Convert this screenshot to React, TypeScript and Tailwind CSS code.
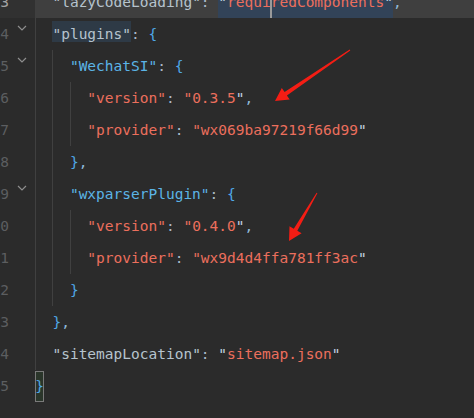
import type { ReactNode } from "react";

const K1 = "text-[#b6c3cd]";
const K2 = "text-[#5bb4e6]";
const K3 = "text-[#ec6f5d]";
const STR = "text-[#ec6f5d]";
const LQ = "text-[#c3d3e2]";
const BR = "text-[#4fa7e6]";
const PUN = "text-[#a9b7c6]";
const COMMA = "text-[#8fb9da]";

function Chevron() {
  return (
    <svg width="10" height="6" viewBox="0 0 10 6" className="block">
      <path d="M1 1 L5 5 L9 1" fill="none" stroke="#8e8e8e" strokeWidth="1.2" />
    </svg>
  );
}

function Row({
  n,
  indent,
  guides,
  current,
  fold,
  children,
}: {
  n: number;
  indent: number;
  guides: number;
  current?: boolean;
  fold?: boolean;
  children: ReactNode;
}) {
  return (
    <div className="flex h-[32px] shrink-0">
      <div className={`flex w-[35px] shrink-0 ${current ? "bg-[#313131]" : ""}`}>
        <div
          className={`flex w-[9px] justify-end overflow-hidden leading-[32px] ${
            current ? "text-[#a4a3a3]" : "text-[#5c5e60]"
          }`}
        >
          {n}
        </div>
        {fold && (
          <div className="ml-[8px] mt-[7px]">
            <Chevron />
          </div>
        )}
      </div>
      <div className={`flex flex-1 ${current ? "bg-[#3f3f3f]" : ""}`}>
        {Array.from({ length: indent }).map((_, i) => (
          <span
            key={i}
            className={`h-full w-[2ch] shrink-0 ${i < guides ? "border-l border-[#404040]" : ""}`}
          />
        ))}
        <div className="whitespace-pre leading-[32px]">{children}</div>
      </div>
    </div>
  );
}

export default function App() {
  return (
    <div className="relative h-[418px] w-[474px] overflow-hidden bg-[#2b2b2b] font-['DejaVu_Sans_Mono',monospace] text-[14.5px]">
      <div className="-mt-[14px] flex flex-col">
        <Row n={3} indent={1} guides={0} current>
          <span className={K1}>"lazyCodeLoading"</span>
          <span className={PUN}>: </span>
          <span className="inline-block h-[32px] bg-[#324358] align-top">
            <span className={LQ}>"</span>
            <span className={STR}>requi</span>
            <span className="relative -mx-[1px] inline-block h-[32px] w-[2px] bg-[#9a9a9a] align-top" />
            <span className={STR}>redComponents</span>
            <span className={LQ}>"</span>
          </span>
          <span className={COMMA}>,</span>
        </Row>
        <Row n={4} indent={1} guides={1} fold>
          <span className={`bg-[#2e3a46] pt-[5px] ${K1}`}>"plugins"</span>
          <span className={PUN}>: </span>
          <span className={BR}>{"{"}</span>
        </Row>
        <Row n={5} indent={2} guides={2} fold>
          <span className={K2}>"WechatSI"</span>
          <span className={PUN}>: </span>
          <span className={BR}>{"{"}</span>
        </Row>
        <Row n={6} indent={3} guides={3}>
          <span className={K3}>"version"</span>
          <span className={PUN}>: </span>
          <span className={STR}>"0.3.5</span>
          <span className={LQ}>"</span>
          <span className={COMMA}>,</span>
        </Row>
        <Row n={7} indent={3} guides={3}>
          <span className={K3}>"provider"</span>
          <span className={PUN}>: </span>
          <span className={STR}>"wx069ba97219f66d99</span>
          <span className={LQ}>"</span>
        </Row>
        <Row n={8} indent={2} guides={2}>
          <span className={BR}>{"}"}</span>
          <span className={COMMA}>,</span>
        </Row>
        <Row n={9} indent={2} guides={2} fold>
          <span className={K2}>"wxparserPlugin"</span>
          <span className={PUN}>: </span>
          <span className={BR}>{"{"}</span>
        </Row>
        <Row n={10} indent={3} guides={3}>
          <span className={K3}>"version"</span>
          <span className={PUN}>: </span>
          <span className={STR}>"0.4.0</span>
          <span className={LQ}>"</span>
          <span className={COMMA}>,</span>
        </Row>
        <Row n={11} indent={3} guides={3}>
          <span className={K3}>"provider"</span>
          <span className={PUN}>: </span>
          <span className={STR}>"wx9d4d4ffa781ff3ac</span>
          <span className={LQ}>"</span>
        </Row>
        <Row n={12} indent={2} guides={2}>
          <span className={BR}>{"}"}</span>
        </Row>
        <Row n={13} indent={1} guides={1}>
          <span className={BR}>{"}"}</span>
          <span className={COMMA}>,</span>
        </Row>
        <Row n={14} indent={1} guides={1}>
          <span className={K1}>"sitemapLocation"</span>
          <span className={PUN}>: </span>
          <span className={LQ}>"</span>
          <span className={STR}>sitemap.json</span>
          <span className={LQ}>"</span>
        </Row>
        <Row n={15} indent={0} guides={0}>
          <span
            className={`mt-px inline-flex h-[31px] w-[9px] items-center justify-center border border-[#7a7a7a] bg-[#2a352a] align-top leading-[29px] ${BR}`}
          >
            {"}"}
          </span>
        </Row>
      </div>

      {/* red annotation arrows pasted over the screenshot */}
      <svg
        className="pointer-events-none absolute inset-0"
        width="474"
        height="418"
        viewBox="0 0 474 418"
      >
        <polygon
          points="350.3,50.4 349.7,49.6 284.6,92.0 281.8,87.9 275,101 289.7,99.5 286.9,95.4"
          fill="#f41d14"
        />
        <polygon
          points="317.4,193.3 316.6,192.7 293.8,228.8 289.5,226.3 289,241 301.6,233.3 297.3,230.8"
          fill="#f41d14"
        />
      </svg>
    </div>
  );
}
